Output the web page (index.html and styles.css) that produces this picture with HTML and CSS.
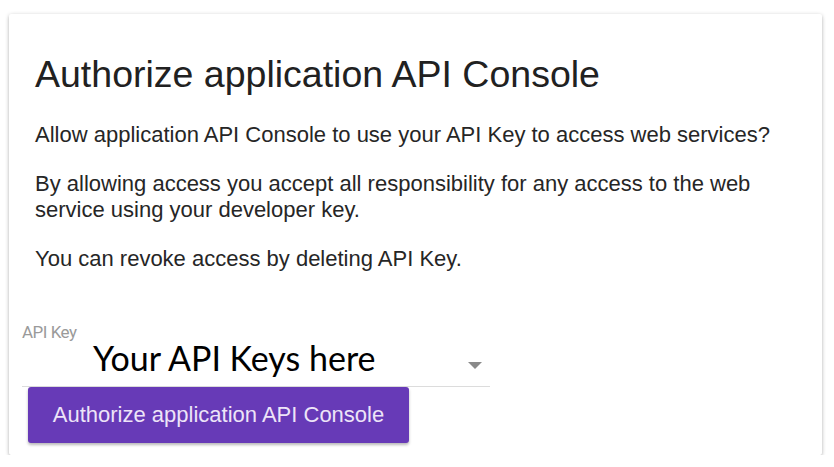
FILE: index.html
```html
<!DOCTYPE html>
<html>
<head>
<meta charset="utf-8">
<link rel="stylesheet" href="styles.css">
</head>
<body>
<div class="card">
  <div class="content">
    <h1 class="title">Authorize application API Console</h1>
    <p class="para">Allow application API Console to use your API Key to access web services?</p>
    <p class="para">By allowing access you accept all responsibility for any access to the web service using your developer key.</p>
    <p class="para">You can revoke access by deleting API Key.</p>
  </div>
  <div class="field">
    <div class="label">API Key</div>
    <div class="select">
      <span class="value">Your API Keys here</span>
      <svg class="arrow" width="14" height="7" viewBox="0 0 14 7"><path d="M0 0 L14 0 L7 7 Z" fill="#8a8a8a"/></svg>
    </div>
  </div>
  <button class="btn">Authorize application API Console</button>
</div>
</body>
</html>
```

FILE: styles.css
```css
html, body {
  margin: 0;
  padding: 0;
  background: #ffffff;
}
body {
  padding: 14px 12px 0 9px;
  font-family: "Liberation Sans", Arial, sans-serif;
}
.card {
  width: 813px;
  height: 441px;
  box-sizing: border-box;
  background: #fff;
  box-shadow: 0 1px 4px rgba(0,0,0,0.22), 0 2px 3px rgba(0,0,0,0.12);
  border-radius: 2px;
  display: flex;
  flex-direction: column;
}
.content {
  padding: 40px 28px 0 26px;
}
.title {
  margin: 0 0 28px 0;
  font-weight: 400;
  font-size: 37.5px;
  line-height: 40px;
  color: #212121;
}
.para {
  margin: 0 0 23px 0;
  font-size: 22px;
  line-height: 26px;
  color: #262626;
}
.field {
  margin: 28px 0 0 13px;
  width: 468px;
}
.label {
  font-family: Roboto, "Liberation Sans", sans-serif;
  font-size: 17px;
  color: #9a9a9a;
  line-height: 18px;
  letter-spacing: -0.5px;
}
.select {
  height: 46px;
  box-sizing: border-box;
  border-bottom: 1px solid #dcdcdc;
  display: flex;
  align-items: flex-start;
  justify-content: space-between;
}
.value {
  margin: -1px 0 0 71px;
  font-family: Lato, "Noto Sans", sans-serif;
  font-size: 34px;
  color: #000;
  line-height: 36px;
}
.arrow {
  margin: 21px 8px 0 0;
}
.btn {
  align-self: flex-start;
  margin: 0 0 0 19px;
  width: 381px;
  height: 56px;
  border: none;
  border-radius: 3px;
  background: #673ab7;
  color: #ede4f8;
  font-family: "Liberation Sans", Arial, sans-serif;
  font-size: 22px;
  box-shadow: 0 2px 3px rgba(0,0,0,0.28);
  padding: 0;
}
```
